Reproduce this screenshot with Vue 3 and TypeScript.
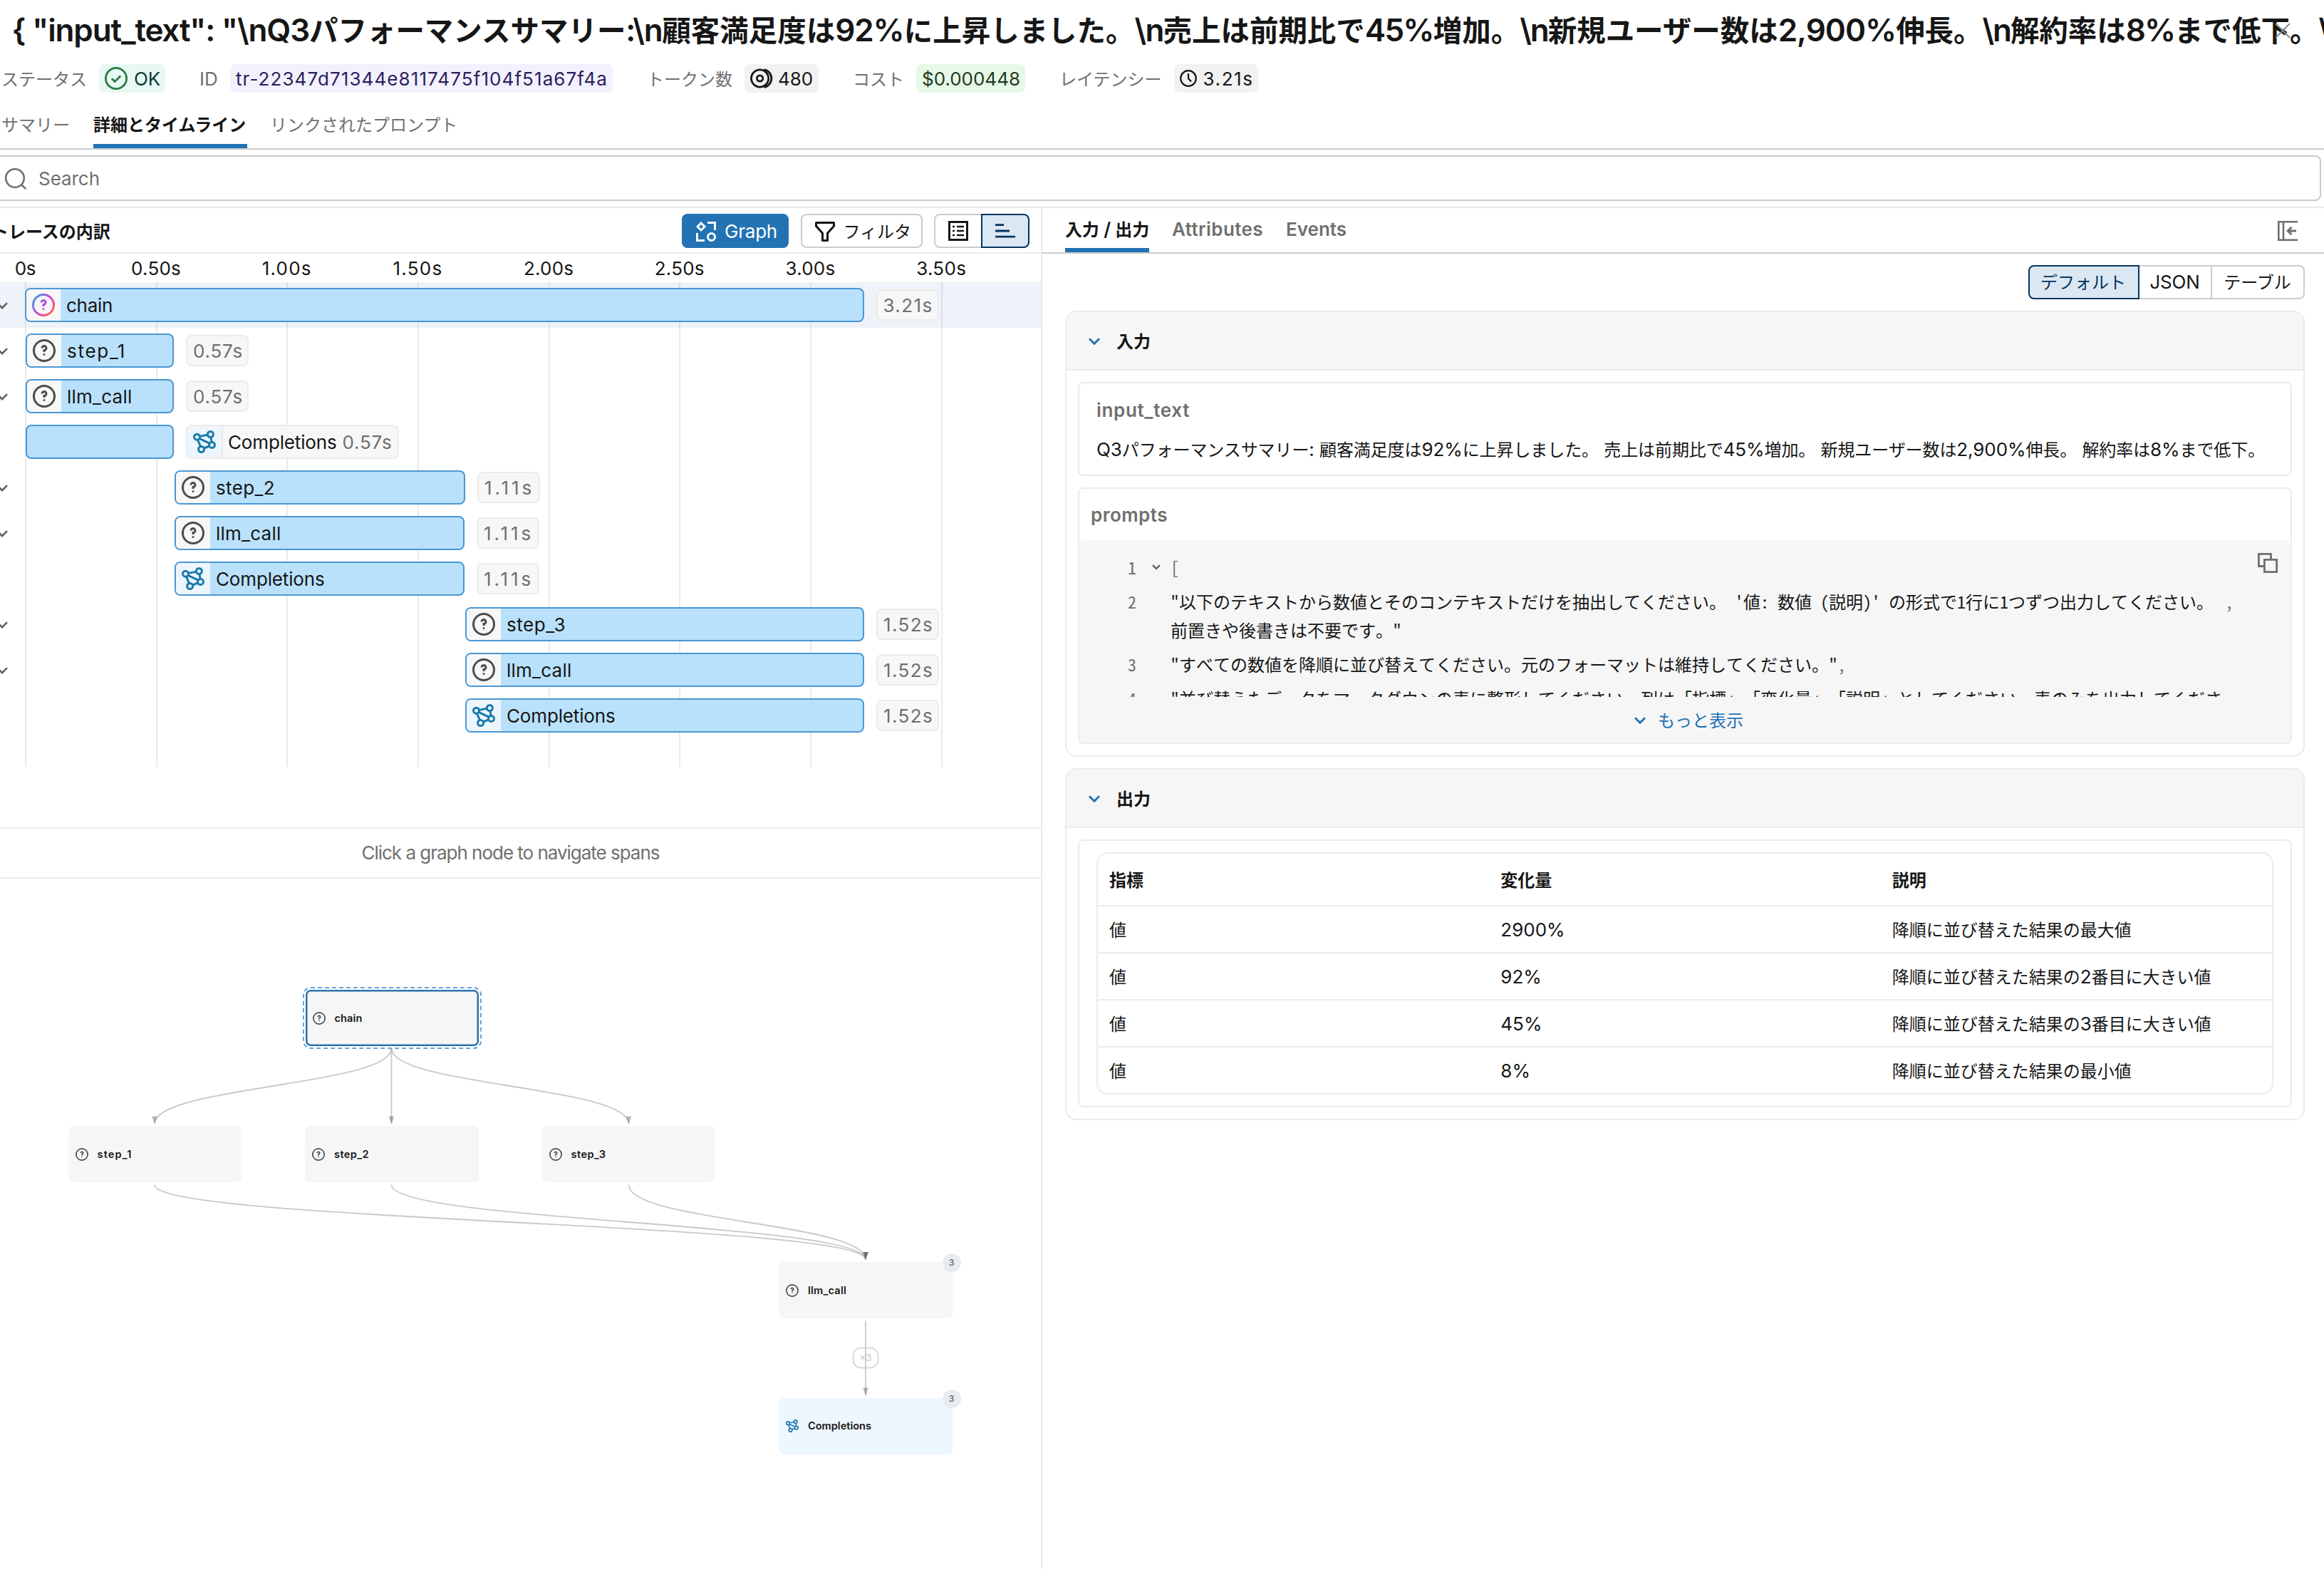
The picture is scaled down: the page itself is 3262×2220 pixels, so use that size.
<script setup lang="ts">
import { h, type FunctionalComponent } from 'vue'

type Kind = 'unknown' | 'model'

interface Span {
  name: string
  kind: Kind
  left: number
  width: number
  duration: string
  nameWidth: number
  active?: boolean
  outside?: boolean
}

interface GraphNode {
  name: string
  kind: Kind
  x: number
  y: number
  textWidth: number
  count?: number
  active?: boolean
}

// Tracks a label so that its text takes the given width.
const vFit = {
  mounted(el: HTMLElement, binding: { value?: number }) {
    if (!binding.value) return
    const n = Array.from(el.textContent ?? '').length
    const natural = el.getBoundingClientRect().width
    el.style.letterSpacing = `${(binding.value - natural) / n}px`
  },
}

// Japanese runs are set a little smaller than the Latin ones beside them.
const Mixed: FunctionalComponent<{ text: string }> = (props) =>
  h(
    'span',
    { class: 'mixed' },
    props.text
      .split(/([\u3000-\u30ff\u4e00-\u9fff\uff00-\uffef]+)/)
      .filter((s) => s.length)
      .map((s) => (/[\u3000-\u9fff\uff00-\uffef]/.test(s) ? h('span', { class: 'cjk' }, s) : s)),
  )
Mixed.props = ['text']

const title: { t: string; w?: number }[] = [
  { t: '{ "input_text": "\\nQ3', w: 417.5 },
  { t: 'パフォーマンスサマリー' },
  { t: ':\\n', w: 51 },
  { t: '顧客満足度は' },
  { t: '92%', w: 96.6 },
  { t: 'に上昇しました。' },
  { t: '\\n', w: 40 },
  { t: '売上は前期比で' },
  { t: '45%', w: 96 },
  { t: '増加。' },
  { t: '\\n', w: 39.5 },
  { t: '新規ユーザー数は' },
  { t: '2,900%', w: 165.5 },
  { t: '伸長。' },
  { t: '\\n', w: 39.3 },
  { t: '解約率は' },
  { t: '8%', w: 68.3 },
  { t: 'まで低下。' },
  { t: '\\n', w: 40 },
]

const ticks = ['0s', '0.50s', '1.00s', '1.50s', '2.00s', '2.50s', '3.00s', '3.50s']

const spans: Span[] = [
  { name: 'chain', kind: 'unknown', left: 35, width: 1178, duration: '3.21s', nameWidth: 65, active: true },
  { name: 'step_1', kind: 'unknown', left: 36, width: 208, duration: '0.57s', nameWidth: 83 },
  { name: 'llm_call', kind: 'unknown', left: 36, width: 208, duration: '0.57s', nameWidth: 91.5 },
  { name: 'Completions', kind: 'model', left: 36, width: 208, duration: '0.57s', nameWidth: 152.5, outside: true },
  { name: 'step_2', kind: 'unknown', left: 245, width: 408, duration: '1.11s', nameWidth: 83 },
  { name: 'llm_call', kind: 'unknown', left: 245, width: 407, duration: '1.11s', nameWidth: 91.5 },
  { name: 'Completions', kind: 'model', left: 245, width: 407, duration: '1.11s', nameWidth: 152.5 },
  { name: 'step_3', kind: 'unknown', left: 653, width: 560, duration: '1.52s', nameWidth: 83 },
  { name: 'llm_call', kind: 'unknown', left: 653, width: 560, duration: '1.52s', nameWidth: 91.5 },
  { name: 'Completions', kind: 'model', left: 653, width: 560, duration: '1.52s', nameWidth: 152.5 },
]

const nodes: GraphNode[] = [
  { name: 'chain', kind: 'unknown', x: 428.5, y: 156, textWidth: 39, active: true },
  { name: 'step_1', kind: 'unknown', x: 95.5, y: 347, textWidth: 49 },
  { name: 'step_2', kind: 'unknown', x: 428, y: 347, textWidth: 49 },
  { name: 'step_3', kind: 'unknown', x: 760.5, y: 347, textWidth: 49 },
  { name: 'llm_call', kind: 'unknown', x: 1093, y: 538, textWidth: 54, count: 3 },
  { name: 'Completions', kind: 'model', x: 1093, y: 728.5, textWidth: 89, count: 3 },
]

const edges = [
  [549.5, 238, 217, 344],
  [549.5, 238, 549.5, 344],
  [549.5, 238, 882.5, 344],
  [217, 429.5, 1215, 534.5],
  [549.5, 429.5, 1215, 534.5],
  [882.5, 429.5, 1215, 534.5],
  [1215, 620.5, 1215, 725],
].map(([x1, y1, x2, y2]) => ({
  d: `M${x1} ${y1}C${x1} ${(y1 + y2) / 2} ${x2} ${(y1 + y2) / 2} ${x2} ${y2}`,
  tip: `M${x2 - 3.8} ${y2 - 10.5}h7.6L${x2} ${y2}z`,
}))

const rows = [
  ['値', '2900%', '降順に並び替えた結果の最大値'],
  ['値', '92%', '降順に並び替えた結果の2番目に大きい値'],
  ['値', '45%', '降順に並び替えた結果の3番目に大きい値'],
  ['値', '8%', '降順に並び替えた結果の最小値'],
]

const QUESTION =
  'M7.25 10.75a.75.75 0 1 1 1.5 0 .75.75 0 0 1-1.5 0M10.079 7.111A2.25 2.25 0 1 0 5.75 6.25h1.5A.75.75 0 1 1 8 7h-.75v2h1.5v-.629a2.25 2.25 0 0 0 1.329-1.26M0 8a8 8 0 1 1 16 0A8 8 0 0 1 0 8m8-6.5a6.5 6.5 0 1 0 0 13 6.5 6.5 0 0 0 0-13'

const KindIcon: FunctionalComponent<{ kind: Kind; active?: boolean }> = (props) =>
  props.kind === 'unknown'
    ? h('svg', { class: 'kind', viewBox: '0 0 16 16' }, [
        h('path', {
          d: QUESTION,
          'fill-rule': 'evenodd',
          fill: props.active ? 'url(#spanActive)' : '#4c4c4c',
        }),
      ])
    : h('svg', { class: 'kind', viewBox: '0 0 16 16', fill: 'none', stroke: '#1a7bab', 'stroke-width': 1.5 }, [
        h('circle', { cx: 2.75, cy: 4.6, r: 2 }),
        h('circle', { cx: 12.2, cy: 2.75, r: 2 }),
        h('circle', { cx: 13.25, cy: 10.2, r: 2 }),
        h('circle', { cx: 5.8, cy: 13.25, r: 2 }),
        h('path', { d: 'M4.7 4.2l5.5-1.1M12.5 4.7l.5 3.5M3.2 6.6l2.1 4.7M7.6 12.5l3.8-1.5M4.4 5.7l7.2 3.4' }),
      ])
KindIcon.props = ['kind', 'active']
</script>

<template>
  <div class="page">
    <svg class="defs" width="0" height="0">
      <linearGradient id="spanActive" x1="0" y1="0.1" x2="1" y2="0.9">
        <stop offset="0.1" stop-color="#4299e0" />
        <stop offset="0.5" stop-color="#ca42e0" />
        <stop offset="0.9" stop-color="#ff5f46" />
      </linearGradient>
    </svg>

    <header class="title">
      <span v-for="(r, i) in title" :key="i" v-fit="r.w" :class="r.w ? 'run' : 'run cjk'">{{ r.t }}</span>
      <svg class="close" viewBox="0 0 22 22" fill="none" stroke="#8a8a8a" stroke-width="2"><path d="M1 1l20 20M21 1L1 21" /></svg>
    </header>

    <div class="meta">
      <div class="item">
        <Mixed class="label" text="ステータス" />
        <span class="pill ok" style="width: 93px">
          <svg width="32" height="32" viewBox="0 0 16 16" fill="none" stroke="#277c43" stroke-width="1.4"><circle cx="8" cy="8" r="7.3" /><path d="M4.9 8.1l2.2 2.2 4-4.1" /></svg>
          <span v-fit="37">OK</span>
        </span>
      </div>
      <div class="item">
        <span class="label" v-fit="26">ID</span>
        <span class="pill id" style="width: 537px"><span v-fit="522">tr-22347d71344e8117475f104f51a67f4a</span></span>
      </div>
      <div class="item">
        <Mixed class="label wide" text="トークン数" />
        <span class="pill coin" style="width: 104px">
          <svg width="32" height="28" viewBox="0 0 32 28" fill="none" stroke="#161616" stroke-width="2.8"><circle cx="13.6" cy="14" r="12.1" /><circle cx="13.6" cy="14" r="4.2" /><path d="M19.5 1.6a12.6 12.6 0 0 1 0 24.8" /></svg>
          <span v-fit="49">480</span>
        </span>
      </div>
      <div class="item">
        <Mixed class="label" text="コスト" />
        <span class="pill cost" style="width: 153px"><span v-fit="138">$0.000448</span></span>
      </div>
      <div class="item">
        <Mixed class="label" text="レイテンシー" />
        <span class="pill" style="width: 118px">
          <svg width="24" height="24" viewBox="0 0 24 24" fill="none" stroke="#161616" stroke-width="2.2"><circle cx="12" cy="12" r="10.8" /><path d="M12 5v7.4l4 4" /></svg>
          <span v-fit="71">3.21s</span>
        </span>
      </div>
    </div>

    <nav class="tabs">
      <span class="tab" style="width: 97px"><Mixed text="サマリー" /></span>
      <span class="tab on" style="width: 216px"><Mixed text="詳細とタイムライン" /></span>
      <span class="tab"><Mixed text="リンクされたプロンプト" /></span>
    </nav>

    <div class="search">
      <svg width="32" height="32" viewBox="0 0 32 32" fill="none" stroke="#6f6f6f" stroke-width="2.6"><circle cx="15" cy="15" r="12.8" /><path d="M24 24l6.2 6.2" /></svg>
      <span v-fit="86">Search</span>
    </div>

    <main class="body">
      <section class="left">
        <div class="bar">
          <h2><Mixed text="トレースの内訳" /></h2>
          <div class="tools">
            <button class="btn primary">
              <svg width="28" height="28" viewBox="0 0 28 28" fill="none" stroke="#fff" stroke-width="3"><path d="M7 2l5 5-5 5-5-5z" /><path d="M16 1.5h10.5V12" /><path d="M1.5 16v10.5H12" /><circle cx="21.5" cy="21.5" r="5" /></svg>
              <span v-fit="74">Graph</span>
            </button>
            <button class="btn filter">
              <svg width="28" height="28" viewBox="0 0 28 28" fill="none" stroke="#161616" stroke-width="3" stroke-linejoin="round"><path d="M1.5 1.5h25v4.8l-9 10V26.5h-7V16.3l-9-10z" /></svg>
              <Mixed text="フィルタ" />
            </button>
            <div class="seg">
              <span class="cell c1">
                <svg width="28" height="28" viewBox="0 0 28 28" fill="none" stroke="#161616" stroke-width="3"><path d="M1.5 1.5h25v25h-25z" /><path d="M6 8h3M12 8h10M6 14h3M12 14h10M6 20h3M12 20h10" stroke-width="2.6" /></svg>
              </span>
              <span class="cell c2 on">
                <svg width="28" height="28" viewBox="0 0 28 28" fill="none" stroke="#04355d" stroke-width="2.8"><path d="M0 5.7h12M0 14h20M0 22.2h28" /></svg>
              </span>
            </div>
          </div>
        </div>

        <div class="axis"><span v-for="t in ticks" :key="t"><b v-fit="t === '0s' ? 29 : 70">{{ t }}</b></span></div>

        <div class="timeline">
          <div v-for="(s, i) in spans" :key="i" class="row" :class="{ active: s.active }">
            <svg v-if="s.kind === 'unknown'" class="chev" width="16" height="10" viewBox="0 0 16 10" fill="none" stroke="#5f5f5f" stroke-width="2.6"><path d="M1 1.2l7 7 7-7" /></svg>
            <div class="span" :style="{ marginLeft: s.left + 'px', width: s.width + 'px' }">
              <template v-if="!s.outside">
                <span class="ico" :class="s.kind"><KindIcon :kind="s.kind" :active="s.active" /></span>
                <span v-fit="s.nameWidth">{{ s.name }}</span>
              </template>
            </div>
            <div v-if="s.outside" class="tag">
              <span class="ico model"><KindIcon :kind="s.kind" /></span>
              <span v-fit="s.nameWidth">{{ s.name }}</span>
              <span class="dur" v-fit="70">{{ s.duration }}</span>
            </div>
            <div v-else class="time"><span v-fit="70">{{ s.duration }}</span></div>
          </div>
          <div class="grid"><i v-for="t in ticks" :key="t"></i></div>
        </div>

        <div class="hint"><span v-fit="418">Click a graph node to navigate spans</span></div>

        <div class="canvas">
          <svg class="edges" width="1461" height="960" fill="none">
            <g v-for="(e, i) in edges" :key="i">
              <path :d="e.d" stroke="#9a9a9a" stroke-opacity="0.55" stroke-width="1.8" />
              <path :d="e.tip" fill="#444" fill-opacity="0.38" />
            </g>
            <rect x="1197.5" y="658.5" width="35" height="28" rx="11" stroke="#cfcfcf" stroke-width="1.4" />
          </svg>
          <span class="times">×3</span>
          <div
            v-for="n in nodes"
            :key="n.name"
            class="node"
            :class="[n.kind, { active: n.active }]"
            :style="{ left: n.x + 'px', top: n.y + 'px' }"
          >
            <KindIcon :kind="n.kind" />
            <span v-fit="n.textWidth">{{ n.name }}</span>
            <em v-if="n.count">{{ n.count }}</em>
          </div>
        </div>
      </section>

      <section class="right">
        <nav class="tabs inner">
          <span class="tab on"><span v-fit="118"><Mixed text="入力 / 出力" /></span></span>
          <span class="tab" v-fit="128">Attributes</span>
          <span class="tab" v-fit="85">Events</span>
          <svg class="fold" width="28" height="28" viewBox="0 0 28 28" fill="none" stroke="#6f6f6f" stroke-width="2.6"><path d="M28 1.3H1.3v25.4H28M8 1.3v25.4" /><path d="M26 14H14.5M19.5 8.7L14.2 14l5.3 5.3" stroke-width="3" /></svg>
        </nav>

        <div class="content">
          <div class="modes">
            <span class="mode on" style="width: 156px"><Mixed text="デフォルト" /></span>
            <span class="mode" style="width: 102px"><span v-fit="70">JSON</span></span>
            <span class="mode last" style="width: 130px"><Mixed text="テーブル" /></span>
          </div>

          <div class="card">
            <div class="head">
              <svg width="16" height="10" viewBox="0 0 16 10" fill="none" stroke="#2272b4" stroke-width="3"><path d="M1 1.2l7 7 7-7" /></svg>
              <Mixed text="入力" />
            </div>
            <div class="inside">
              <div class="box text">
                <div class="key"><span v-fit="131">input_text</span></div>
                <div class="val"><span v-fit="1640"><Mixed text="Q3パフォーマンスサマリー: 顧客満足度は92%に上昇しました。 売上は前期比で45%増加。 新規ユーザー数は2,900%伸長。 解約率は8%まで低下。" /></span></div>
              </div>
              <div class="box json">
                <div class="key"><span v-fit="108">prompts</span></div>
                <div class="code">
                  <svg class="copy" width="28" height="28" viewBox="0 0 28 28" fill="none" stroke="#6f6f6f" stroke-width="2.8"><path d="M8.5 18.5H1.4V1.4h17.1v7" /><path d="M9.4 9.4h17.2v17.2H9.4z" /></svg>
                  <div class="lines">
                    <div class="line">
                      <span class="no">1</span>
                      <span class="fd"><svg width="12" height="8" viewBox="0 0 12 8" fill="none" stroke="#5f5f5f" stroke-width="2.4"><path d="M1 1l5 5 5-5" /></svg></span>
                      <span class="punc">[</span>
                    </div>
                    <div class="line">
                      <span class="no">2</span><span class="fd"></span>
                      <span class="str">"以下のテキストから数値とそのコンテキストだけを抽出してください。 '値: 数値 (説明)' の形式で1行に1つずつ出力してください。<br />前置きや後書きは不要です。"</span><span class="punc">,</span>
                    </div>
                    <div class="line">
                      <span class="no">3</span><span class="fd"></span>
                      <span class="str auto">"すべての数値を降順に並び替えてください。元のフォーマットは維持してください。"</span><span class="punc">,</span>
                    </div>
                    <div class="line">
                      <span class="no">4</span><span class="fd"></span>
                      <span class="str">"並び替えたデータをマークダウンの表に整形してください。列は「指標」「変化量」「説明」としてください。表のみを出力してくださ</span>
                    </div>
                  </div>
                  <div class="more">
                    <svg width="16" height="10" viewBox="0 0 16 10" fill="none" stroke="#2272b4" stroke-width="3"><path d="M1 1.2l7 7 7-7" /></svg>
                    <Mixed text="もっと表示" />
                  </div>
                </div>
              </div>
            </div>
          </div>

          <div class="card">
            <div class="head">
              <svg width="16" height="10" viewBox="0 0 16 10" fill="none" stroke="#2272b4" stroke-width="3"><path d="M1 1.2l7 7 7-7" /></svg>
              <Mixed text="出力" />
            </div>
            <div class="inside">
              <div class="box out">
                <div class="table">
                  <div class="tr th"><Mixed text="指標" /><Mixed text="変化量" /><Mixed text="説明" /></div>
                  <div v-for="r in rows" :key="r[1]" class="tr"><Mixed v-for="(c, i) in r" :key="i" :text="c" /></div>
                </div>
              </div>
            </div>
          </div>
        </div>
      </section>
    </main>
  </div>
</template>

<style>
body {
  background: #fff;
}
.cjk {
  font-family: 'Noto Sans CJK JP', sans-serif;
  font-size: 0.9235em;
  line-height: 0;
}
.mixed {
  white-space: pre;
}
.kind {
  flex: none;
  display: block;
  width: 32px;
  height: 32px;
}
</style>

<style scoped>
.page {
  position: relative;
  width: 3262px;
  height: 2220px;
  overflow: hidden;
  display: flex;
  flex-direction: column;
  background: #fff;
  color: #161616;
  font-family: Inter, 'Noto Sans CJK JP', sans-serif;
  font-size: 26px;
  line-height: 32px;
  text-spacing-trim: space-all;
}
.page svg {
  flex: none;
}
.defs {
  position: absolute;
}
.title {
  position: relative;
  height: 86px;
  padding-left: 16.5px;
  box-sizing: border-box;
  display: flex;
  align-items: baseline;
  font-size: 44px;
  font-weight: 600;
  line-height: 84px;
  white-space: pre;
  overflow: hidden;
}
.run {
  flex: none;
}
.run.cjk {
  font-size: 40.48px;
}
.close {
  position: absolute;
  left: 3193px;
  top: 32px;
  width: 22px;
  height: 22px;
}
.meta {
  display: flex;
  gap: 48px;
  padding: 4px 0 0 2px;
  height: 40px;
}
.item {
  display: flex;
  align-items: center;
  gap: 17px;
  color: #6f6f6f;
}
.label {
  padding-top: 2px;
}
.label.wide {
  width: 120px;
}
.pill {
  display: flex;
  align-items: center;
  gap: 9px;
  box-sizing: border-box;
  height: 40px;
  padding: 0 8px;
  border-radius: 8px;
  background: #f2f2f2;
  color: #161616;
  white-space: nowrap;
}
.pill > span {
  padding-top: 1px;
}
.pill.coin {
  gap: 7px;
}
.pill.ok {
  background: #e8f8f3;
  color: #0c3b32;
}
.pill.id {
  background: #f3f1fd;
  color: #2b1f5c;
}
.pill.cost {
  background: #e7f8e7;
  color: #1f3b22;
}
.tabs {
  display: flex;
  gap: 32px;
  height: 78px;
  flex: none;
  padding-left: 2px;
  border-bottom: 2px solid #cbcbcb;
  color: #6f6f6f;
}
.tab {
  display: flex;
  align-items: center;
  box-sizing: border-box;
  height: 78px;
  padding-top: 17px;
  border-bottom: 6px solid transparent;
  white-space: nowrap;
}
.tab.on {
  color: #161616;
  font-weight: 600;
  border-color: #2272b4;
}
.search {
  display: flex;
  align-items: center;
  gap: 16px;
  flex: none;
  box-sizing: border-box;
  height: 64px;
  width: 3278px;
  margin: 8px 0 8px -20px;
  padding-left: 24px;
  padding-top: 1px;
  border: 2px solid #cbcbcb;
  border-radius: 8px;
  color: #6f6f6f;
}
.body {
  display: flex;
  height: 1911px;
  box-sizing: border-box;
  border-top: 2px solid #ebebeb;
}
.left {
  width: 1461px;
  flex: none;
  overflow: hidden;
  border-right: 2px solid #e8e8e8;
}
.bar {
  display: flex;
  justify-content: space-between;
  align-items: center;
  box-sizing: border-box;
  height: 64px;
  padding: 0 16px 0 0;
  border-bottom: 2px solid #ebebeb;
}
h2 {
  margin: 0 0 0 -12px;
  padding-top: 3px;
  font-size: 26px;
  font-weight: 600;
}
.tools {
  display: flex;
  gap: 16.5px;
  padding-top: 2px;
}
.btn {
  display: flex;
  align-items: center;
  box-sizing: border-box;
  height: 48px;
  margin: 0;
  padding: 1px 0 0 18px;
  gap: 12px;
  width: 171px;
  border: 2px solid #cbcbcb;
  border-radius: 8px;
  background: #fff;
  color: #161616;
  font: inherit;
  white-space: nowrap;
}
.btn.primary {
  width: 150px;
  background: #2272b4;
  border-color: #2272b4;
  color: #fff;
}
.seg {
  display: flex;
}
.cell {
  display: flex;
  align-items: center;
  justify-content: center;
  box-sizing: border-box;
  height: 48px;
  border: 2px solid #cbcbcb;
}
.c1 {
  width: 66px;
  border-right: 0;
  border-radius: 8px 0 0 8px;
}
.c2 {
  width: 68px;
  border-color: #04355d;
  background: #dbe7f3;
  border-radius: 0 8px 8px 0;
}
.axis {
  display: flex;
  height: 40px;
  align-items: center;
  margin-left: -56.5px;
}
.axis span {
  flex: none;
  width: 183.7px;
  text-align: center;
  padding-top: 1px;
}
.axis b {
  display: inline-block;
  font-weight: 400;
}
.timeline {
  position: relative;
  height: 767px;
  box-sizing: border-box;
  border-bottom: 2px solid #ebebeb;
}
.grid {
  position: absolute;
  left: 35px;
  top: 0;
  height: 680px;
  display: flex;
}
.grid i {
  box-sizing: border-box;
  width: 183.7px;
  border-left: 2px solid rgba(20, 20, 40, 0.09);
}
.row {
  position: relative;
  display: flex;
  align-items: center;
  height: 64px;
}
.row.active {
  background: #eef3f9;
}
.chev {
  position: absolute;
  left: -5px;
  top: 28px;
}
.span {
  position: relative;
  z-index: 1;
  display: flex;
  align-items: center;
  gap: 8px;
  flex: none;
  box-sizing: border-box;
  height: 48px;
  border: 2px solid #4a97d4;
  border-radius: 8px;
  background: #b9e1fb;
  overflow: hidden;
}
.span > span:last-child,
.tag > span {
  padding-top: 1px;
}
.ico {
  display: flex;
  align-items: center;
  justify-content: center;
  width: 48px;
  height: 44px;
  flex: none;
  background: #f7f7f7;
}
.span .ico,
.tag .ico {
  padding-top: 0;
}
.ico.model {
  background: #eef6fd;
}
.time,
.tag {
  position: relative;
  z-index: 1;
  display: flex;
  align-items: center;
  box-sizing: border-box;
  margin-left: 17px;
  border: 2px solid #ebebeb;
  border-radius: 8px;
  background: #f7f7f7;
  color: #6f6f6f;
}
.time {
  width: 88px;
  height: 44px;
  padding: 1px 0 0 8px;
}
.row.active .time {
  margin-left: 16.5px;
}
.tag {
  width: 299px;
  height: 48px;
  color: #161616;
  overflow: hidden;
}
.tag .ico {
  border-right: 2px solid #e6ebf0;
  margin-right: 7px;
}
.tag .dur {
  color: #6f6f6f;
  margin-left: 8px;
}
.hint {
  display: flex;
  align-items: center;
  justify-content: center;
  height: 68px;
  padding-right: 28px;
  border-bottom: 2px solid #ebebeb;
  color: #6f6f6f;
}
.canvas {
  position: relative;
  height: 968px;
}
.edges {
  position: absolute;
  left: 0;
  top: 0;
}
.times {
  position: absolute;
  left: 1197px;
  top: 658px;
  width: 36px;
  line-height: 29px;
  text-align: center;
  font-size: 13px;
  color: #c4c4c4;
}
.node {
  position: absolute;
  display: flex;
  align-items: center;
  gap: 13px;
  box-sizing: border-box;
  width: 243.5px;
  height: 79px;
  padding-left: 10px;
  border-radius: 7px;
  background: #f6f6f6;
  font-size: 14.6px;
  font-weight: 600;
}
.node .kind {
  width: 18px;
  height: 18px;
}
.node.model {
  background: #eef6fe;
}
.node.active {
  box-shadow: inset 0 0 0 2.5px #2a72b0;
  outline: 2px dashed #6ba3d6;
  outline-offset: 2px;
}
.node em {
  position: absolute;
  right: -12px;
  top: -12px;
  width: 26px;
  height: 26px;
  border-radius: 13px;
  background: #e8ebf0;
  color: #5f5f5f;
  font: 500 12px/26px Inter, sans-serif;
  text-align: center;
}
.right {
  flex: 1;
  min-width: 0;
}
.tabs.inner {
  height: 62px;
  padding-left: 32px;
  position: relative;
}
.inner .tab {
  height: 62px;
  padding-top: 3px;
  font-weight: 600;
}
.fold {
  margin: 18px 37px 0 auto;
}
.content {
  display: flex;
  flex-direction: column;
  gap: 16px;
  padding: 16px 27px 0 32px;
}
.modes {
  display: flex;
  justify-content: flex-end;
}
.mode {
  display: flex;
  align-items: center;
  justify-content: center;
  box-sizing: border-box;
  height: 48px;
  padding-right: 1px;
  border: 2px solid #cbcbcb;
  border-left: 0;
}
.mode.on {
  padding-right: 2px;
  border: 2px solid #04355d;
  border-radius: 8px 0 0 8px;
  background: #dbe7f3;
  color: #04355d;
}
.mode.last {
  border-radius: 0 8px 8px 0;
}
.card {
  border: 2px solid #ebebeb;
  border-radius: 16px;
  overflow: hidden;
}
.head {
  display: flex;
  align-items: center;
  gap: 23px;
  height: 80px;
  padding-left: 31px;
  padding-top: 2px;
  box-sizing: border-box;
  background: #f6f6f6;
  font-weight: 600;
}
.inside {
  display: flex;
  flex-direction: column;
  gap: 16px;
  padding: 16px;
  border-top: 2px solid #ebebeb;
}
.box {
  box-sizing: border-box;
  border: 2px solid #ebebeb;
  border-radius: 8px;
  overflow: hidden;
}
.box.text {
  height: 132px;
  padding: 22px 24px 0;
}
.key {
  color: #6f6f6f;
  font-weight: 600;
}
.val {
  margin-top: 23px;
  white-space: pre;
}
.box.json {
  height: 360px;
}
.json .key {
  height: 72px;
  box-sizing: border-box;
  padding: 21px 0 0 16px;
}
.code {
  position: relative;
  height: 284px;
  background: #f6f6f6;
  border-radius: 8px 8px 0 0;
}
.copy {
  position: absolute;
  right: 18px;
  top: 18px;
}
.lines {
  display: flex;
  flex-direction: column;
  gap: 8px;
  height: 220px;
  box-sizing: border-box;
  padding-top: 18px;
  overflow: hidden;
  font-family: 'Noto Sans Mono CJK JP', 'Noto Sans CJK JP', monospace;
  font-size: 24px;
  line-height: 40px;
  white-space: pre;
}
.line {
  display: flex;
  flex: none;
}
.no {
  width: 80px;
  text-align: right;
  color: #6f6f6f;
}
.fd {
  width: 48px;
  box-sizing: border-box;
  padding-left: 7px;
  display: flex;
  align-items: center;
  justify-content: center;
  height: 40px;
}
.str {
  width: 1480px;
  flex: none;
}
.str.auto {
  width: auto;
}
.punc {
  color: #6f6f6f;
}
.more {
  display: flex;
  align-items: center;
  justify-content: center;
  gap: 17px;
  padding: 17px 0 0 11px;
  color: #2272b4;
}
.out {
  height: 376px;
  padding: 16px 24px;
}
.table {
  border: 2px solid #ebebeb;
  border-radius: 16px;
  overflow: hidden;
}
.tr {
  display: grid;
  grid-template-columns: repeat(3, 1fr);
  align-items: center;
  height: 64px;
  border-top: 2px solid #ebebeb;
}
.tr.th {
  height: 72px;
  border-top: 0;
  font-weight: 600;
}
.tr > * {
  padding: 2px 0 0 16px;
}
</style>
